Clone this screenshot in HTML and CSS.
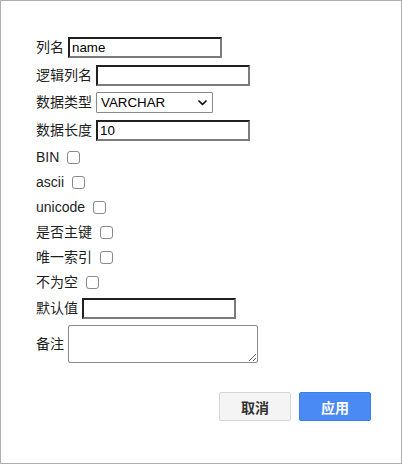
FILE: index.html
```html
<!DOCTYPE html>
<html lang="zh">
<head>
<meta charset="utf-8">
<title>列属性</title>
<link rel="stylesheet" href="styles.css">
</head>
<body>
<div class="dialog">
  <form class="form">
    <div class="row row-field"><label class="lbl">列名</label><input class="txt" type="text" value="name"></div>
    <div class="row row-field"><label class="lbl">逻辑列名</label><input class="txt" type="text" value=""></div>
    <div class="row row-field"><label class="lbl">数据类型</label>
      <span class="select-wrap">
        <select class="sel"><option>VARCHAR</option><option>INT</option><option>TEXT</option></select>
        <svg class="chev" width="9" height="6" viewBox="0 0 9 6"><path d="M1 1 L4.5 4.5 L8 1" fill="none" stroke="#111" stroke-width="1.7" stroke-linecap="round" stroke-linejoin="round"/></svg>
      </span>
    </div>
    <div class="row row-field row-last"><label class="lbl">数据长度</label><input class="txt" type="text" value="10"></div>
    <div class="row row-check"><label class="lbl">BIN</label><input class="chk" type="checkbox"></div>
    <div class="row row-check"><label class="lbl">ascii</label><input class="chk" type="checkbox"></div>
    <div class="row row-check"><label class="lbl">unicode</label><input class="chk" type="checkbox"></div>
    <div class="row row-check"><label class="lbl">是否主键</label><input class="chk" type="checkbox"></div>
    <div class="row row-check"><label class="lbl">唯一索引</label><input class="chk" type="checkbox"></div>
    <div class="row row-check"><label class="lbl">不为空</label><input class="chk" type="checkbox"></div>
    <div class="row row-field"><label class="lbl">默认值</label><input class="txt" type="text" value=""></div>
    <div class="row row-area"><label class="lbl">备注</label><textarea class="area"></textarea></div>
    <div class="actions">
      <button type="button" class="btn btn-cancel">取消</button>
      <button type="button" class="btn btn-primary">应用</button>
    </div>
  </form>
</div>
</body>
</html>
```

FILE: styles.css
```css
html, body {
  margin: 0;
  padding: 0;
  background: #fff;
}

.dialog {
  width: 402px;
  height: 464px;
  box-sizing: border-box;
  border: 1px solid #b0b0b0;
  font-family: "Liberation Sans", "Noto Sans CJK SC", sans-serif;
  font-size: 14px;
  color: #1e1e1e;
}

.form {
  display: flex;
  flex-direction: column;
  padding: 36px 30px 0 35px;
  margin: 0;
}

.row {
  display: flex;
  align-items: center;
}

.row-field {
  height: 21px;
  margin-bottom: 6.5px;
}

.row-last {
  margin-bottom: 7px;
}

.row-check {
  height: 19px;
  margin-bottom: 6px;
}

.row-area {
  height: 38px;
  margin-bottom: 29px;
}

.lbl {
  line-height: 19px;
  white-space: nowrap;
}

.txt {
  box-sizing: border-box;
  width: 154px;
  height: 21px;
  margin: 0 0 0 4px;
  padding: 1px 2px;
  border-width: 2px;
  border-style: solid;
  border-color: #1f1f1f #7b7b7b #7b7b7b #1f1f1f;
  font-family: "Liberation Sans", "Noto Sans CJK SC", sans-serif;
  font-size: 13.33px;
  color: #000;
  background: #fff;
  outline: none;
}

.select-wrap {
  position: relative;
  display: inline-flex;
  margin-left: 4px;
}

.sel {
  box-sizing: border-box;
  width: 117px;
  height: 21px;
  margin: 0;
  padding: 0 0 0 4px;
  border: 1px solid #8a8a8a;
  border-radius: 1px;
  background: #fff;
  appearance: none;
  -webkit-appearance: none;
  font-family: "Liberation Sans", "Noto Sans CJK SC", sans-serif;
  font-size: 13.33px;
  color: #000;
}

.chev {
  position: absolute;
  right: 6px;
  top: 8px;
  pointer-events: none;
}

.chk {
  appearance: none;
  -webkit-appearance: none;
  box-sizing: border-box;
  width: 13px;
  height: 13px;
  margin: 0 0 0 8px;
  border: 1px solid #8a8a8a;
  border-radius: 3px;
  background: #fff;
}

.area {
  box-sizing: border-box;
  width: 190px;
  height: 38px;
  margin: 0 0 0 4px;
  padding: 2px;
  border: 1px solid #8a8a8a;
  border-radius: 2px;
  font-family: "Liberation Sans", "Noto Sans CJK SC", sans-serif;
  font-size: 13.33px;
}

.actions {
  display: flex;
  justify-content: flex-end;
  gap: 8px;
}

.btn {
  box-sizing: border-box;
  width: 72px;
  height: 29px;
  margin: 0;
  padding: 0;
  border-radius: 2px;
  font-family: "Liberation Sans", "Noto Sans CJK SC", sans-serif;
  font-size: 14px;
  font-weight: bold;
}

.btn-cancel {
  background: #f4f4f4;
  border: 1px solid #d6d6d6;
  color: #333;
}

.btn-primary {
  background: #4a8af4;
  border: 1px solid #3d7fe9;
  color: #fff;
}
```
